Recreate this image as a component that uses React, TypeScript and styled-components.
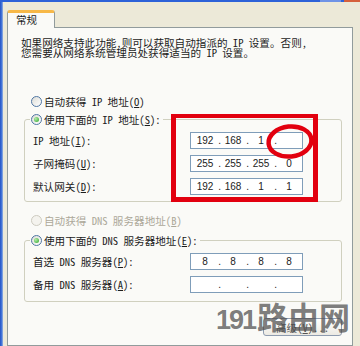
import React from "react";
import styled, { createGlobalStyle } from "styled-components";

const FONT = `"Noto Sans CJK SC", "Liberation Sans", sans-serif`;
const NUM_FONT = `"Liberation Sans", "DejaVu Sans", sans-serif`;

const Global = createGlobalStyle`
  html, body { margin: 0; padding: 0; background: #ECE9D8; }
  body { width: 360px; height: 346px; overflow: hidden; }
  #root { width: 360px; height: 346px; }
`;

const Screen = styled.div`
  position: relative;
  width: 360px;
  height: 346px;
  overflow: hidden;
  background: #ece9d8;
  display: flex;
  flex-direction: column;
  font-family: ${FONT};
  font-feature-settings: "hwid" 1;
  font-size: 10.6px;
  color: #1c1c1c;
`;

const TitleEdge = styled.div`
  height: 2px;
  flex: none;
  display: flex;
  justify-content: flex-end;
  gap: 3px;
  background: #2d62d8;
`;

const TitleButton = styled.div<{ $w: number; $c: string }>`
  width: ${(p) => p.$w}px;
  height: 2px;
  background: ${(p) => p.$c};
`;

const Body = styled.div`
  flex: 1;
  display: flex;
  min-height: 0;
`;

const FrameEdge = styled.div`
  width: 3px;
  flex: none;
  background: linear-gradient(to right, #2452c4, #4a7cdc 65%, #a9bde0);
`;

const Content = styled.div`
  flex: 1;
  min-width: 0;
  padding: 8px 7px 0 4px;
  display: flex;
  flex-direction: column;
`;

const TabStrip = styled.div`
  display: flex;
  flex: none;
`;

const Tab = styled.div`
  position: relative;
  z-index: 1;
  box-sizing: border-box;
  width: 48px;
  height: 18px;
  margin-bottom: -1px;
  padding: 1px 0 0 8px;
  border: 1px solid #919b9c;
  border-top: 3px solid #f7b847;
  border-bottom: none;
  border-radius: 3px 3px 0 0;
  background: #fafaf7;
  font-size: 10.6px;
  line-height: 12px;
`;

const Panel = styled.div`
  flex: 1;
  border: 1px solid #919b9c;
  background: #fafaf7;
  display: flex;
  flex-direction: column;
`;

const Intro = styled.p`
  margin: 10px 0 0 13px;
  line-height: 10px;
  white-space: nowrap;
`;

const RadioRow = styled.div<{ $top: number; $disabled?: boolean }>`
  display: flex;
  align-items: center;
  gap: 2px;
  height: 14px;
  margin: ${(p) => p.$top}px 0 0 23px;
  color: ${(p) => (p.$disabled ? "#aca899" : "#1c1c1c")};
  white-space: nowrap;
`;

const RadioCircle = styled.span<{ $checked?: boolean; $disabled?: boolean }>`
  flex: none;
  box-sizing: border-box;
  width: 11px;
  height: 11px;
  border-radius: 50%;
  border: 1px solid ${(p) => (p.$disabled ? "#cdcbc0" : "#4f76a3")};
  background: ${(p) =>
    p.$disabled ? "#f4f3ee" : "linear-gradient(135deg, #dcdcd6, #ffffff)"};
  display: flex;
  align-items: center;
  justify-content: center;
  &::after {
    content: "";
    display: ${(p) => (p.$checked ? "block" : "none")};
    width: 5px;
    height: 5px;
    border-radius: 50%;
    background: radial-gradient(circle at 35% 35%, #b4ecaa, #2aa52a);
  }
`;

const GroupBox = styled.fieldset<{ $top: number; $bottom: number }>`
  margin: ${(p) => p.$top}px 10px 0 16px;
  padding: 6px 8px ${(p) => p.$bottom}px 8px;
  border: 1px solid #d0d0bf;
  border-radius: 3px;
  min-width: 0;
  display: flex;
  flex-direction: column;
  gap: 6px;
`;

const GroupLegend = styled.legend`
  margin-left: -3px;
  padding: 0 2px 0 1px;
  height: 14px;
  display: flex;
  align-items: center;
  gap: 2px;
  white-space: nowrap;
`;

const FieldRow = styled.div`
  display: grid;
  grid-template-columns: 157px 113px;
  align-items: center;
  height: 17px;
`;

const FieldLabel = styled.span`
  white-space: nowrap;
`;

const IpInput = styled.div`
  box-sizing: border-box;
  width: 113px;
  height: 17px;
  border: 1px solid #7f9db9;
  background: #ffffff;
  display: flex;
  align-items: center;
  padding: 0 2px 0 3px;
  font-family: ${NUM_FONT};
  font-feature-settings: normal;
  font-size: 10px;
  color: #222;
`;

const Octet = styled.span`
  width: 22px;
  text-align: center;
`;

const Dot = styled.span`
  width: 6px;
  text-align: right;
  padding-right: 1px;
  box-sizing: border-box;
`;

const ButtonRow = styled.div`
  display: flex;
  justify-content: flex-end;
  margin: 16px 10px 0 0;
`;

const Button = styled.div`
  box-sizing: border-box;
  width: 79px;
  height: 18px;
  border: 1px solid #8e9cb0;
  border-radius: 3px;
  background: linear-gradient(#ffffff, #eceae3);
  display: flex;
  align-items: center;
  justify-content: center;
  color: #555;
  white-space: nowrap;
`;

const RedFrame = styled.div`
  position: absolute;
  left: 171px;
  top: 114px;
  width: 147px;
  height: 88px;
  box-sizing: border-box;
  border: 5px solid #e2000f;
  border-top-width: 4px;
  pointer-events: none;
`;

const RedRing = styled.svg`
  position: absolute;
  left: 265px;
  top: 123px;
  width: 50px;
  height: 37px;
  pointer-events: none;
`;

const Watermark = styled.div`
  position: absolute;
  left: 216px;
  top: 293px;
  display: flex;
  align-items: baseline;
  color: rgba(78, 78, 78, 0.74);
  font-weight: 700;
  font-feature-settings: normal;
  pointer-events: none;
  white-space: nowrap;
`;

const WatermarkDigits = styled.span`
  font-family: ${NUM_FONT};
  font-size: 27px;
  letter-spacing: -2px;
  margin-right: 2px;
`;

const WatermarkText = styled.span`
  font-family: ${FONT};
  font-size: 31px;
`;

const Acc: React.FC<{ k: string }> = ({ k }) => (
  <>
    (<u>{k}</u>)
  </>
);

const Ip: React.FC<{ parts: string[] }> = ({ parts }) => (
  <IpInput>
    <Octet>{parts[0]}</Octet>
    <Dot>.</Dot>
    <Octet>{parts[1]}</Octet>
    <Dot>.</Dot>
    <Octet>{parts[2]}</Octet>
    <Dot>.</Dot>
    <Octet>{parts[3]}</Octet>
  </IpInput>
);

export default function App() {
  return (
    <>
      <Global />
      <Screen>
        <TitleEdge>
          <TitleButton $w={21} $c="#6f93e6" />
          <TitleButton $w={16} $c="#d5603c" />
        </TitleEdge>
        <Body>
          <FrameEdge />
          <Content>
            <TabStrip>
              <Tab>常规</Tab>
            </TabStrip>
            <Panel>
              <Intro>
                如果网络支持此功能，则可以获取自动指派的 IP 设置。否则，
                <br />
                您需要从网络系统管理员处获得适当的 IP 设置。
              </Intro>

              <RadioRow $top={36}>
                <RadioCircle />
                <span>
                  自动获得 IP 地址<Acc k="O" />
                </span>
              </RadioRow>

              <GroupBox $top={4} $bottom={6}>
                <GroupLegend>
                  <RadioCircle $checked />
                  <span>
                    使用下面的 IP 地址<Acc k="S" />:
                  </span>
                </GroupLegend>
                <FieldRow>
                  <FieldLabel>
                    IP 地址<Acc k="I" />:
                  </FieldLabel>
                  <Ip parts={["192", "168", "1", ""]} />
                </FieldRow>
                <FieldRow>
                  <FieldLabel>
                    子网掩码<Acc k="U" />:
                  </FieldLabel>
                  <Ip parts={["255", "255", "255", "0"]} />
                </FieldRow>
                <FieldRow>
                  <FieldLabel>
                    默认网关<Acc k="D" />:
                  </FieldLabel>
                  <Ip parts={["192", "168", "1", "1"]} />
                </FieldRow>
              </GroupBox>

              <RadioRow $top={11} $disabled>
                <RadioCircle $disabled />
                <span>
                  自动获得 DNS 服务器地址<Acc k="B" />
                </span>
              </RadioRow>

              <GroupBox $top={6} $bottom={8}>
                <GroupLegend>
                  <RadioCircle $checked />
                  <span>
                    使用下面的 DNS 服务器地址<Acc k="E" />:
                  </span>
                </GroupLegend>
                <FieldRow>
                  <FieldLabel>
                    首选 DNS 服务器<Acc k="P" />:
                  </FieldLabel>
                  <Ip parts={["8", "8", "8", "8"]} />
                </FieldRow>
                <FieldRow>
                  <FieldLabel>
                    备用 DNS 服务器<Acc k="A" />:
                  </FieldLabel>
                  <Ip parts={["", "", "", ""]} />
                </FieldRow>
              </GroupBox>

              <ButtonRow>
                <Button>
                  高级<Acc k="V" />...
                </Button>
              </ButtonRow>
            </Panel>
          </Content>
        </Body>

        <RedFrame />
        <RedRing viewBox="0 0 50 37">
          <ellipse
            cx="25"
            cy="18.5"
            rx="21.5"
            ry="15"
            fill="none"
            stroke="#e2000f"
            strokeWidth="4.5"
            transform="rotate(-6 25 18.5)"
          />
        </RedRing>
        <Watermark>
          <WatermarkDigits>191</WatermarkDigits>
          <WatermarkText>路由网</WatermarkText>
        </Watermark>
      </Screen>
    </>
  );
}
